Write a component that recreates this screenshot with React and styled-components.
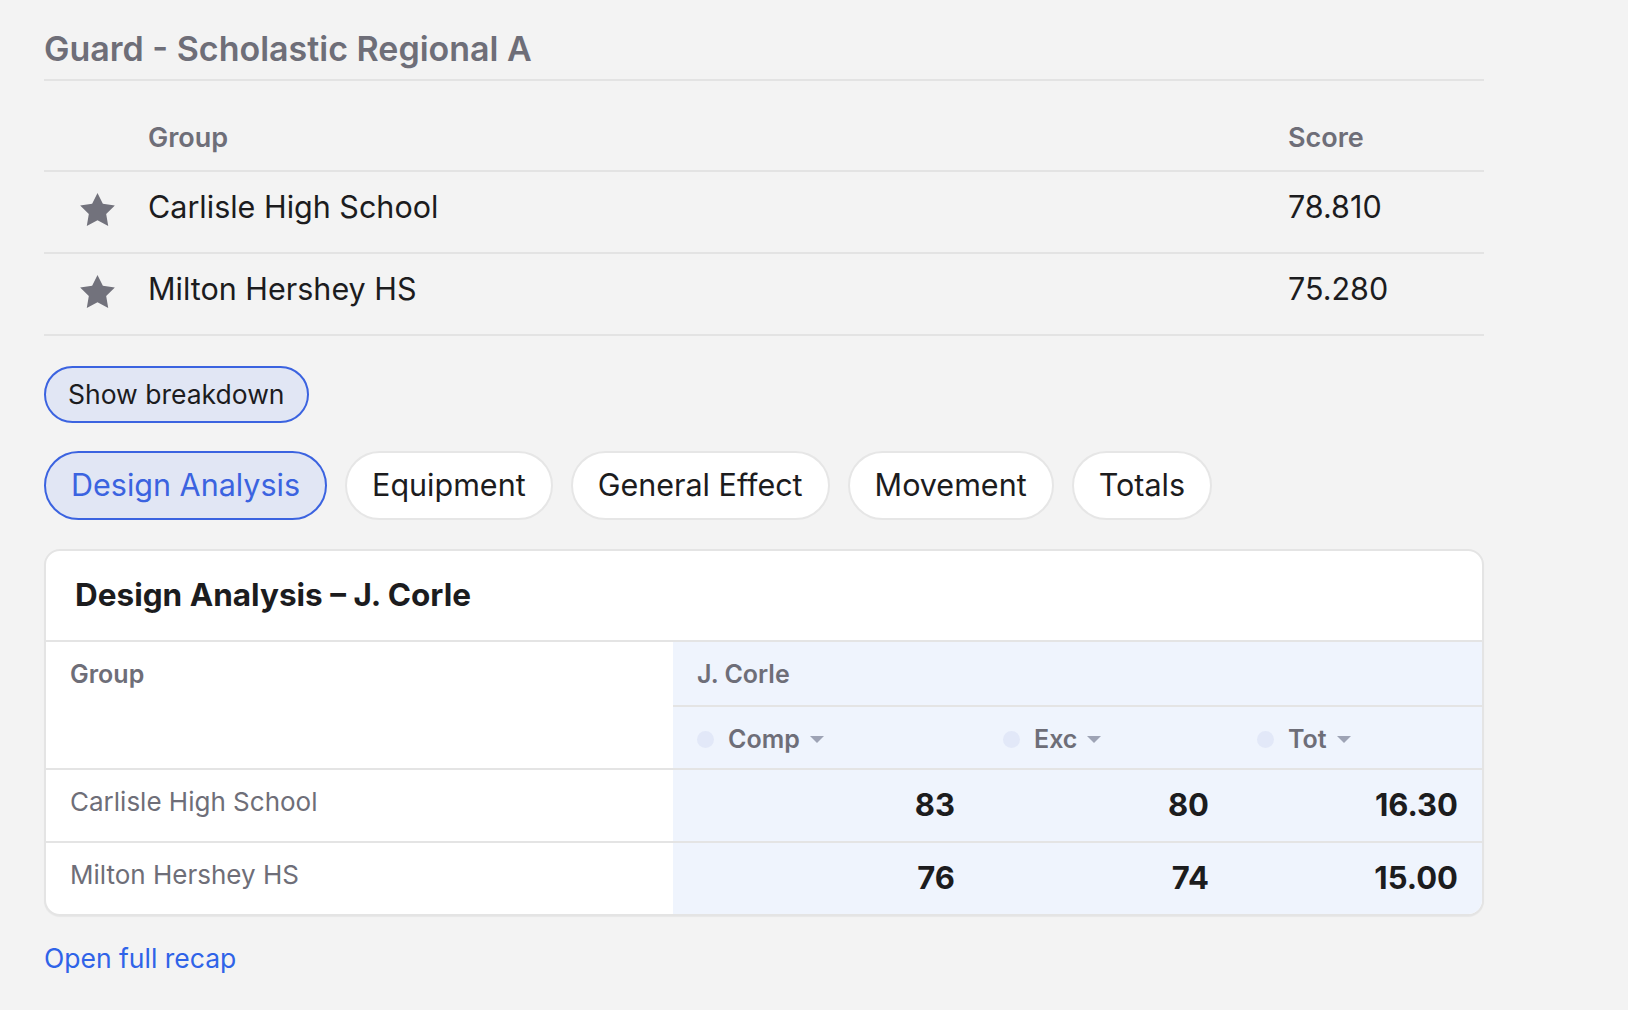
import React from 'react'
import styled, { createGlobalStyle, css } from 'styled-components'

const GlobalStyle = createGlobalStyle`
    body {
        margin: 0;
        background: #f3f3f3;
        font-family: Inter, "Noto Sans", sans-serif;
        color: #1c1c1e;
    }
`

const Page = styled.div`
    width: 1440px;
    padding: 28px 0 40px 44px;
`

const Title = styled.h2`
    margin: 0;
    padding-bottom: 9px;
    border-bottom: 2px solid #e3e3e3;
    font-size: 34px;
    line-height: 42px;
    font-weight: 600;
    color: #6e6e78;
`

const ListGrid = css`
    display: grid;
    grid-template-columns: 104px 1fr 196px;
    border-bottom: 2px solid #e3e3e3;
`

const ListHead = styled.div`
    ${ListGrid}
    padding: 41px 0 16px;
    font-size: 27px;
    line-height: 32px;
    font-weight: 600;
    color: #6e6e78;
`

const ListRow = styled.div`
    ${ListGrid}
    padding: 17px 0 26px;
    font-size: 30.5px;
    line-height: 36px;
`

const StarCell = styled.div`
    padding: 4px 0 0 36px;
    line-height: 0;
`

const Toggle = styled.button`
    display: block;
    margin-top: 30px;
    padding: 10px 22px 11px;
    border: 2px solid #3b63e0;
    border-radius: 999px;
    background: #e1e6f4;
    font: 400 26.5px/32px Inter, "Noto Sans", sans-serif;
    color: #1c1c1e;
`

const Tabs = styled.div`
    display: flex;
    gap: 18px;
    margin-top: 28px;
`

const Tab = styled.button`
    padding: 14px 25px 15px;
    border: 2px solid ${p => (p.$active ? '#3b63e0' : '#e6e6e6')};
    border-radius: 999px;
    background: ${p => (p.$active ? '#e1e6f4' : '#ffffff')};
    font: 400 30.5px/36px Inter, "Noto Sans", sans-serif;
    color: ${p => (p.$active ? '#3b63e0' : '#1c1c1e')};
`

const Card = styled.section`
    box-sizing: border-box;
    width: 1440px;
    margin-top: 29px;
    border: 2px solid #e4e4e4;
    border-radius: 16px;
    background: #ffffff;
    overflow: hidden;
    box-shadow: 0 1px 1px rgba(0, 0, 0, 0.05);
`

const CardTitle = styled.h3`
    margin: 0;
    padding: 26px 29px 27px;
    border-bottom: 2px solid #e4e4e4;
    font-size: 31.5px;
    line-height: 36px;
    font-weight: 700;
`

const Table = styled.table`
    width: 100%;
    border-collapse: collapse;
    table-layout: fixed;
`

const HeadCell = styled.th`
    padding: 17px 24px ${p => (p.$sub ? '14px' : '16px')};
    border-bottom: 2px solid #e4e4e4;
    background: ${p => (p.$judge ? '#eff4fd' : '#ffffff')};
    text-align: left;
    vertical-align: top;
    font-size: 25px;
    line-height: 30px;
    font-weight: 600;
    color: #6e6e78;
`

const SortLabel = styled.div`
    display: flex;
    align-items: center;
`

const Dot = styled.span`
    width: 17px;
    height: 17px;
    margin-right: 14px;
    border-radius: 50%;
    background: #e2e8f8;
`

const Caret = styled.span`
    margin-left: 10px;
    width: 0;
    height: 0;
    border-left: 7px solid transparent;
    border-right: 7px solid transparent;
    border-top: 7px solid #9ea3b5;
`

const Cell = styled.td`
    padding: 17px 24px 18px;
    vertical-align: top;
    border-bottom: ${p => (p.$last ? 'none' : '2px solid #e4e4e4')};
    ${p => p.$num ? css`
        background: #eff4fd;
        text-align: right;
        font-size: 31px;
        line-height: 36px;
        font-weight: 700;
    ` : css`
        font-size: 26px;
        line-height: 30px;
        color: #6e6e78;
    `}
`

const RecapLink = styled.a`
    display: inline-block;
    margin-top: 26px;
    font-size: 26.5px;
    line-height: 32px;
    color: #2f63e8;
    text-decoration: none;
`

const Star = () => (
    <svg width="35" height="33" viewBox="2 2 20 19.02" fill="#72727c">
        <polygon points="12,2 15.09,8.26 22,9.27 17,14.14 18.18,21.02 12,17.77 5.82,21.02 7,14.14 2,9.27 8.91,8.26" />
    </svg>
)

const groups = [
    { name: 'Carlisle High School', score: '78.810', comp: 83, exc: 80, tot: '16.30' },
    { name: 'Milton Hershey HS', score: '75.280', comp: 76, exc: 74, tot: '15.00' },
]

const tabs = ['Design Analysis', 'Equipment', 'General Effect', 'Movement', 'Totals']
const subCols = ['Comp', 'Exc', 'Tot']

export default function App() {
    return (
        <Page>
            <GlobalStyle />
            <Title>Guard - Scholastic Regional A</Title>
            <ListHead>
                <div />
                <div>Group</div>
                <div>Score</div>
            </ListHead>
            {groups.map(g => (
                <ListRow key={g.name}>
                    <StarCell><Star /></StarCell>
                    <div>{g.name}</div>
                    <div>{g.score}</div>
                </ListRow>
            ))}
            <Toggle>Show breakdown</Toggle>
            <Tabs>
                {tabs.map((t, i) => (
                    <Tab key={t} $active={i === 0}>{t}</Tab>
                ))}
            </Tabs>
            <Card>
                <CardTitle>Design Analysis – J. Corle</CardTitle>
                <Table>
                    <colgroup>
                        <col style={{ width: 627 }} />
                        <col style={{ width: 306 }} />
                        <col style={{ width: 254 }} />
                        <col style={{ width: 249 }} />
                    </colgroup>
                    <thead>
                        <tr>
                            <HeadCell rowSpan={2}>Group</HeadCell>
                            <HeadCell colSpan={3} $judge>J. Corle</HeadCell>
                        </tr>
                        <tr>
                            {subCols.map(c => (
                                <HeadCell key={c} $judge $sub>
                                    <SortLabel><Dot />{c}<Caret /></SortLabel>
                                </HeadCell>
                            ))}
                        </tr>
                    </thead>
                    <tbody>
                        {groups.map((g, i) => {
                            const last = i === groups.length - 1
                            return (
                                <tr key={g.name}>
                                    <Cell $last={last}>{g.name}</Cell>
                                    <Cell $num $last={last}>{g.comp}</Cell>
                                    <Cell $num $last={last}>{g.exc}</Cell>
                                    <Cell $num $last={last}>{g.tot}</Cell>
                                </tr>
                            )
                        })}
                    </tbody>
                </Table>
            </Card>
            <RecapLink href="#">Open full recap</RecapLink>
        </Page>
    )
}
